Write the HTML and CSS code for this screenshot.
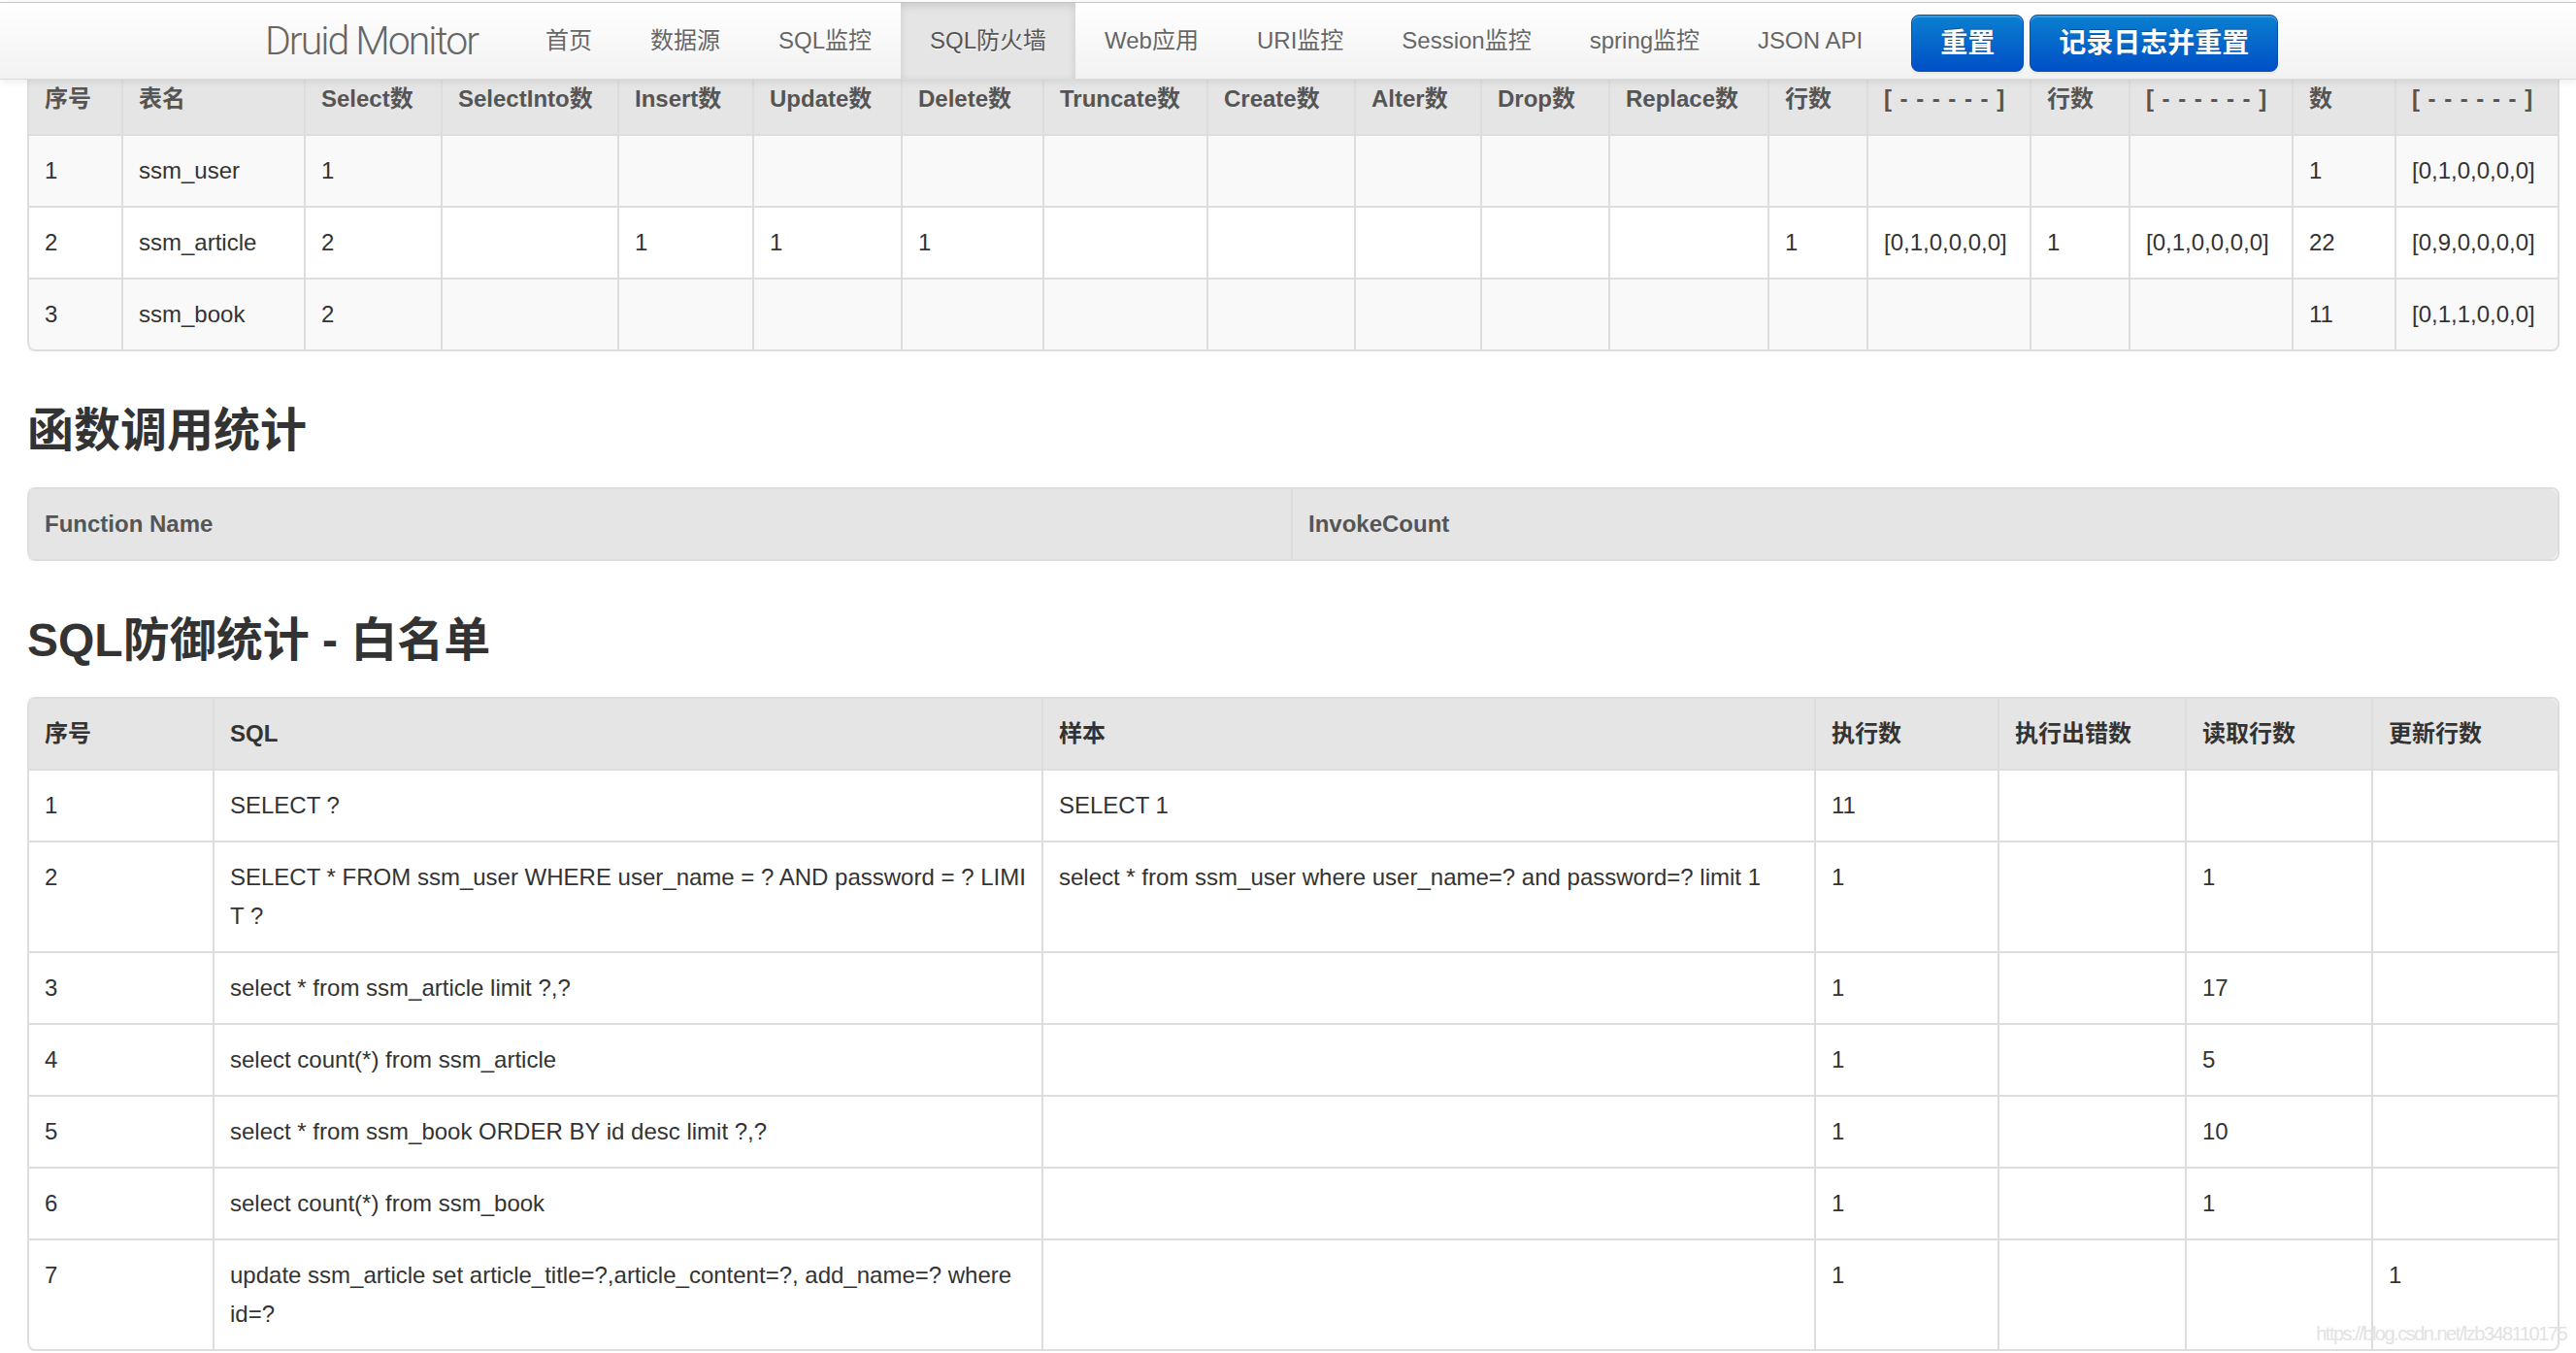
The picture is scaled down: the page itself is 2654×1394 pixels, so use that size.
FILE: index.html
```html
<!DOCTYPE html>
<html lang="zh-CN">
<head>
<meta charset="utf-8">
<title>Druid Monitor - SQL防火墙</title>
<link rel="stylesheet" href="styles.css">
</head>
<body>
<div class="navbar">
  <div class="navbar-inner">
    <span class="brand">Druid Monitor</span>
    <ul class="nav">
      <li>首页</li>
      <li>数据源</li>
      <li>SQL监控</li>
      <li class="active">SQL防火墙</li>
      <li>Web应用</li>
      <li>URI监控</li>
      <li>Session监控</li>
      <li>spring监控</li>
      <li>JSON API</li>
    </ul>
    <button class="btn btn-primary first">重置</button>
    <button class="btn btn-primary">记录日志并重置</button>
  </div>
</div>

<div class="content">
  <table class="table table-bordered table-striped t-tables">
    <thead>
      <tr>
        <th>序号</th><th>表名</th><th>Select数</th><th>SelectInto数</th><th>Insert数</th><th>Update数</th><th>Delete数</th><th>Truncate数</th><th>Create数</th><th>Alter数</th><th>Drop数</th><th>Replace数</th><th>行数</th><th class="dash">[------]</th><th>行数</th><th class="dash">[------]</th><th>数</th><th class="dash">[------]</th>
      </tr>
    </thead>
    <tbody>
      <tr>
        <td>1</td><td>ssm_user</td><td>1</td><td></td><td></td><td></td><td></td><td></td><td></td><td></td><td></td><td></td><td></td><td></td><td></td><td></td><td>1</td><td>[0,1,0,0,0,0]</td>
      </tr>
      <tr>
        <td>2</td><td>ssm_article</td><td>2</td><td></td><td>1</td><td>1</td><td>1</td><td></td><td></td><td></td><td></td><td></td><td>1</td><td>[0,1,0,0,0,0]</td><td>1</td><td>[0,1,0,0,0,0]</td><td>22</td><td>[0,9,0,0,0,0]</td>
      </tr>
      <tr>
        <td>3</td><td>ssm_book</td><td>2</td><td></td><td></td><td></td><td></td><td></td><td></td><td></td><td></td><td></td><td></td><td></td><td></td><td></td><td>11</td><td>[0,1,1,0,0,0]</td>
      </tr>
    </tbody>
  </table>

  <h3>函数调用统计</h3>
  <table class="table table-bordered t-func">
    <thead>
      <tr><th>Function Name</th><th>InvokeCount</th></tr>
    </thead>
  </table>

  <h3>SQL防御统计 - 白名单</h3>
  <table class="table table-bordered t-white">
    <thead>
      <tr><th>序号</th><th>SQL</th><th>样本</th><th>执行数</th><th>执行出错数</th><th>读取行数</th><th>更新行数</th></tr>
    </thead>
    <tbody>
      <tr><td>1</td><td>SELECT ?</td><td>SELECT 1</td><td>11</td><td></td><td></td><td></td></tr>
      <tr><td>2</td><td>SELECT * FROM ssm_user WHERE user_name = ? AND password = ? LIMIT ?</td><td>select * from ssm_user where user_name=? and password=? limit 1</td><td>1</td><td></td><td>1</td><td></td></tr>
      <tr><td>3</td><td>select * from ssm_article limit ?,?</td><td></td><td>1</td><td></td><td>17</td><td></td></tr>
      <tr><td>4</td><td>select count(*) from ssm_article</td><td></td><td>1</td><td></td><td>5</td><td></td></tr>
      <tr><td>5</td><td>select * from ssm_book ORDER BY id desc limit ?,?</td><td></td><td>1</td><td></td><td>10</td><td></td></tr>
      <tr><td>6</td><td>select count(*) from ssm_book</td><td></td><td>1</td><td></td><td>1</td><td></td></tr>
      <tr><td>7</td><td>update ssm_article set article_title=?,article_content=?, add_name=? where <span class="nobr">id=?</span></td><td></td><td>1</td><td></td><td></td><td>1</td></tr>
    </tbody>
  </table>
</div>

<div class="watermark">https://blog.csdn.net/lzb348110175</div>
</body>
</html>
```

FILE: styles.css
```css
* {
  box-sizing: border-box;
}

html,
body {
  margin: 0;
  padding: 0;
  overflow: hidden;
  background: #ffffff;
}

body {
  font-family: "Liberation Sans", "Noto Sans CJK SC", sans-serif;
  font-size: 24px;
  line-height: 40px;
  color: #333333;
}

/* ---------- navbar ---------- */
.navbar {
  position: absolute;
  top: 2px;
  left: 0;
  right: 0;
  z-index: 10;
  border-top: 1px solid #c9c9c9;
}

.navbar-inner {
  display: flex;
  align-items: flex-start;
  height: 79px;
  padding-left: 233px;
  background: linear-gradient(to bottom, #ffffff, #f2f2f2);
  border-bottom: 1px solid #dcdcdc;
  box-shadow: 0 2px 8px rgba(0, 0, 0, 0.09);
}

.brand {
  padding: 0 40px;
  line-height: 78px;
  font-family: Roboto, "Liberation Sans", sans-serif;
  font-weight: 300;
  font-size: 41px;
  letter-spacing: -2px;
  color: #666666;
  white-space: nowrap;
}

.nav {
  display: flex;
  list-style: none;
  margin: 0;
  padding: 0;
}

.nav li {
  padding: 0 30px;
  line-height: 78px;
  height: 78px;
  font-size: 24px;
  color: #666666;
  text-shadow: 0 1px 0 #ffffff;
  white-space: nowrap;
}

.nav li.active {
  background: #e5e5e5;
  color: #555555;
  box-shadow: inset 0 3px 8px rgba(0, 0, 0, 0.125);
}

.btn {
  margin-top: 12px;
  margin-left: 6px;
  height: 59px;
  padding: 0 29px;
  line-height: 57px;
  font-family: "Liberation Sans", "Noto Sans CJK SC", sans-serif;
  font-size: 28px;
  font-weight: bold;
  color: #ffffff;
  text-shadow: 0 -1px 0 rgba(0, 0, 0, 0.25);
  border: 1px solid #0a4fb0;
  border-radius: 8px;
  background: linear-gradient(to bottom, #0a80d0, #004fc6);
  box-shadow: inset 0 2px 0 rgba(255, 255, 255, 0.2), 0 2px 2px rgba(0, 0, 0, 0.05);
  white-space: nowrap;
}

.btn.first {
  margin-left: 20px;
}

/* ---------- content ---------- */
.content {
  padding: 64px 17px 0 28px;
}

h3 {
  margin: 20px 0;
  padding-top: 3px;
  font-size: 48px;
  line-height: 77px;
  font-weight: bold;
  color: #333333;
}

.table {
  width: 100%;
  table-layout: fixed;
  border-collapse: separate;
  border-spacing: 0;
  margin: 0 0 40px 0;
}

.table-bordered {
  border: 2px solid #dddddd;
  border-left: 0;
  border-radius: 8px;
}

.table th,
.table td {
  padding: 16px;
  line-height: 40px;
  text-align: left;
  vertical-align: top;
  border-top: 2px solid #dddddd;
  border-left: 2px solid #dddddd;
  word-break: break-all;
  overflow: hidden;
}

.table thead th {
  border-top: 0;
  background: #e5e5e5;
  font-weight: bold;
  vertical-align: bottom;
  color: #555555;
  white-space: nowrap;
}

.table thead tr:first-child th:first-child {
  border-top-left-radius: 8px;
}

.table thead tr:first-child th:last-child {
  border-top-right-radius: 8px;
}

.table tbody tr:last-child td:first-child,
.t-func thead th:first-child {
  border-bottom-left-radius: 8px;
}

.table tbody tr:last-child td:last-child,
.t-func thead th:last-child {
  border-bottom-right-radius: 8px;
}

.table-striped tbody tr:nth-child(odd) td {
  background: #f9f9f9;
}

.nobr {
  white-space: nowrap;
}

.dash {
  letter-spacing: 8.6px;
}

/* column widths: table statistics */
.t-tables th:nth-child(1) { width: 97px; }
.t-tables th:nth-child(2) { width: 188px; }
.t-tables th:nth-child(3) { width: 141px; }
.t-tables th:nth-child(4) { width: 182px; }
.t-tables th:nth-child(5) { width: 139px; }
.t-tables th:nth-child(6) { width: 153px; }
.t-tables th:nth-child(7) { width: 146px; }
.t-tables th:nth-child(8) { width: 169px; }
.t-tables th:nth-child(9) { width: 152px; }
.t-tables th:nth-child(10) { width: 130px; }
.t-tables th:nth-child(11) { width: 132px; }
.t-tables th:nth-child(12) { width: 164px; }
.t-tables th:nth-child(13) { width: 102px; }
.t-tables th:nth-child(14) { width: 168px; }
.t-tables th:nth-child(15) { width: 102px; }
.t-tables th:nth-child(16) { width: 168px; }
.t-tables th:nth-child(17) { width: 106px; }

/* column widths: function table */
.t-func th:nth-child(1) { width: 1302px; }

/* column widths: whitelist */
.t-white thead th {
  color: #333333;
}
.t-white th:nth-child(1) { width: 191px; }
.t-white th:nth-child(2) { width: 854px; }
.t-white th:nth-child(3) { width: 796px; }
.t-white th:nth-child(4) { width: 189px; }
.t-white th:nth-child(5) { width: 193px; }
.t-white th:nth-child(6) { width: 192px; }

/* ---------- watermark ---------- */
.watermark {
  position: absolute;
  right: 10px;
  bottom: 8px;
  font-size: 20px;
  line-height: 24px;
  letter-spacing: -1.5px;
  color: #e2e2e2;
  white-space: nowrap;
}
```
